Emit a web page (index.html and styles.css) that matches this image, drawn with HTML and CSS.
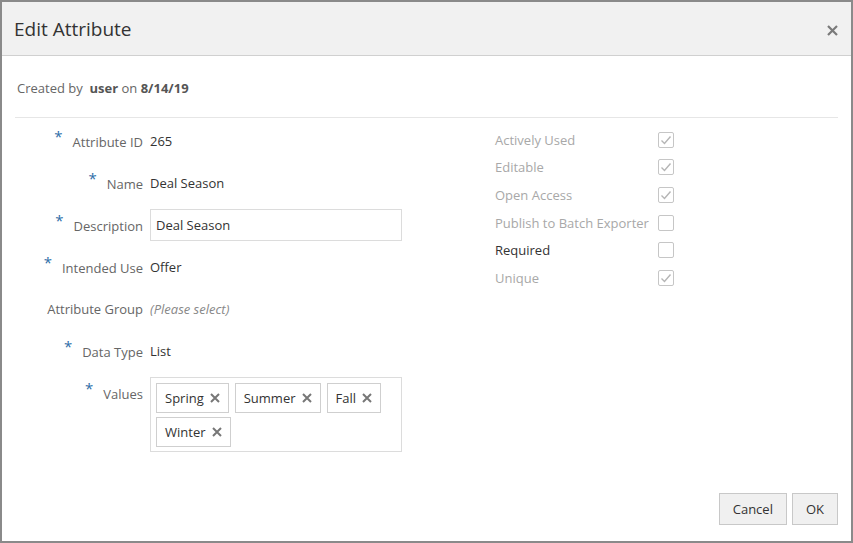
FILE: index.html
```html
<!DOCTYPE html>
<html>
<head>
<meta charset="utf-8">
<link rel="stylesheet" href="styles.css">
</head>
<body>
<div class="dialog">
  <div class="header">
    <div class="title">Edit Attribute</div>
    <svg class="close" width="11" height="11" viewBox="0 0 11 11"><path d="M1 1L10 10M10 1L1 10" stroke="#7a7a7a" stroke-width="2.2" fill="none"/></svg>
  </div>
  <div class="body">
    <div class="created">Created by&nbsp; <b>user</b> on <b>8/14/19</b></div>
    <div class="sep"></div>
    <div class="cols">
      <div class="form">
        <div class="row"><div class="label"><span class="req">*</span>Attribute ID</div><div class="val">265</div></div>
        <div class="row"><div class="label"><span class="req">*</span>Name</div><div class="val">Deal Season</div></div>
        <div class="row"><div class="label"><span class="req">*</span>Description</div><div class="val"><div class="input">Deal Season</div></div></div>
        <div class="row"><div class="label"><span class="req">*</span>Intended Use</div><div class="val">Offer</div></div>
        <div class="row"><div class="label">Attribute Group</div><div class="val ph">(Please select)</div></div>
        <div class="row"><div class="label"><span class="req">*</span>Data Type</div><div class="val">List</div></div>
        <div class="row top"><div class="label"><span class="req">*</span>Values</div>
          <div class="val">
            <div class="chips">
              <span class="chip">Spring<svg width="10" height="10" viewBox="0 0 10 10"><path d="M1 1L9 9M9 1L1 9" stroke="#777" stroke-width="2" fill="none"/></svg></span>
              <span class="chip">Summer<svg width="10" height="10" viewBox="0 0 10 10"><path d="M1 1L9 9M9 1L1 9" stroke="#777" stroke-width="2" fill="none"/></svg></span>
              <span class="chip">Fall<svg width="10" height="10" viewBox="0 0 10 10"><path d="M1 1L9 9M9 1L1 9" stroke="#777" stroke-width="2" fill="none"/></svg></span>
              <span class="chip">Winter<svg width="10" height="10" viewBox="0 0 10 10"><path d="M1 1L9 9M9 1L1 9" stroke="#777" stroke-width="2" fill="none"/></svg></span>
            </div>
          </div>
        </div>
      </div>
      <div class="flags">
        <div class="flag dis"><span class="flabel">Actively Used</span><span class="cb"><svg width="14" height="14" viewBox="0 0 14 14"><path d="M2.5 7.5L5.5 10.5L11.5 3.5" stroke="#b5b5b5" stroke-width="1.4" fill="none"/></svg></span></div>
        <div class="flag dis"><span class="flabel">Editable</span><span class="cb"><svg width="14" height="14" viewBox="0 0 14 14"><path d="M2.5 7.5L5.5 10.5L11.5 3.5" stroke="#b5b5b5" stroke-width="1.4" fill="none"/></svg></span></div>
        <div class="flag dis"><span class="flabel">Open Access</span><span class="cb"><svg width="14" height="14" viewBox="0 0 14 14"><path d="M2.5 7.5L5.5 10.5L11.5 3.5" stroke="#b5b5b5" stroke-width="1.4" fill="none"/></svg></span></div>
        <div class="flag dis"><span class="flabel">Publish to Batch Exporter</span><span class="cb"></span></div>
        <div class="flag"><span class="flabel">Required</span><span class="cb"></span></div>
        <div class="flag dis"><span class="flabel">Unique</span><span class="cb"><svg width="14" height="14" viewBox="0 0 14 14"><path d="M2.5 7.5L5.5 10.5L11.5 3.5" stroke="#b5b5b5" stroke-width="1.4" fill="none"/></svg></span></div>
      </div>
    </div>
  </div>
  <div class="footer">
    <button class="btn">Cancel</button>
    <button class="btn">OK</button>
  </div>
</div>
</body>
</html>
```
FILE: styles.css
```css
html, body { margin: 0; padding: 0; background: #fff; }
body { font-family: "Open Sans", "Noto Sans", sans-serif; font-size: 13px; color: #333; }
.dialog {
  width: 853px; height: 543px; box-sizing: border-box;
  border: 2px solid #8a8a8a;
  display: flex; flex-direction: column;
  background: #fff;
}
.header {
  height: 53px; background: #f1f1f1; border-bottom: 1px solid #d0d0d0;
  display: flex; align-items: center; justify-content: space-between;
  padding: 0 13px 0 12px;
}
.title { font-size: 19px; color: #333; margin-top: 1px; }
.close { margin-top: 4px; }
.body { flex: 1; padding: 0 13px; }
.created { height: 62px; display: flex; align-items: center; color: #666; padding: 1px 0 0 2px; box-sizing: border-box; white-space: pre; }
.created b { color: #555; font-weight: 700; }
.sep { height: 1px; background: #e6e6e6; margin-top: -1px; }
.cols { display: flex; padding-top: 2px; }
.form { width: 387px; }
.row { display: grid; grid-template-columns: 128px 252px; column-gap: 7px; height: 42px; align-items: center; }
.row.top { align-items: start; height: auto; padding-top: 5px; }
.row.top .label { padding-top: 6px; }
.label { text-align: right; color: #666; white-space: nowrap; }
.req { color: #2e6ea8; font-size: 15px; position: relative; top: -5px; margin-right: 10px; }
.val { color: #333; white-space: nowrap; }
.ph { font-style: italic; color: #888; }
.input { height: 30px; border: 1px solid #dcdcdc; display: flex; align-items: center; padding-left: 5px; }
.chips { border: 1px solid #dcdcdc; padding: 5px; display: flex; flex-wrap: wrap; gap: 4px 6px; height: 63px; box-sizing: content-box; align-content: flex-start; }
.chip { height: 28px; border: 1px solid #cfcfcf; display: inline-flex; align-items: center; padding: 0 8px 0 8px; gap: 6px; font-size: 13px; color: #333; background: #fff; }
.flags { margin-left: 93px; padding-top: 6px; }
.flag { height: 27.6px; display: flex; align-items: center; }
.flabel { width: 163px; color: #333; }
.flag.dis .flabel { color: #a8a8a8; }
.cb { width: 14px; height: 14px; border: 1px solid #c6c6c6; border-radius: 2px; display: inline-flex; align-items: center; justify-content: center; background: #fff; }
.footer { display: flex; justify-content: flex-end; gap: 5px; padding: 0 13px 16px 0; }
.btn {
  font-family: inherit; font-size: 13px; color: #333;
  height: 32px; padding: 0 13px; background: #f0f0f0; border: 1px solid #c8c8c8; border-radius: 0;
}
```
